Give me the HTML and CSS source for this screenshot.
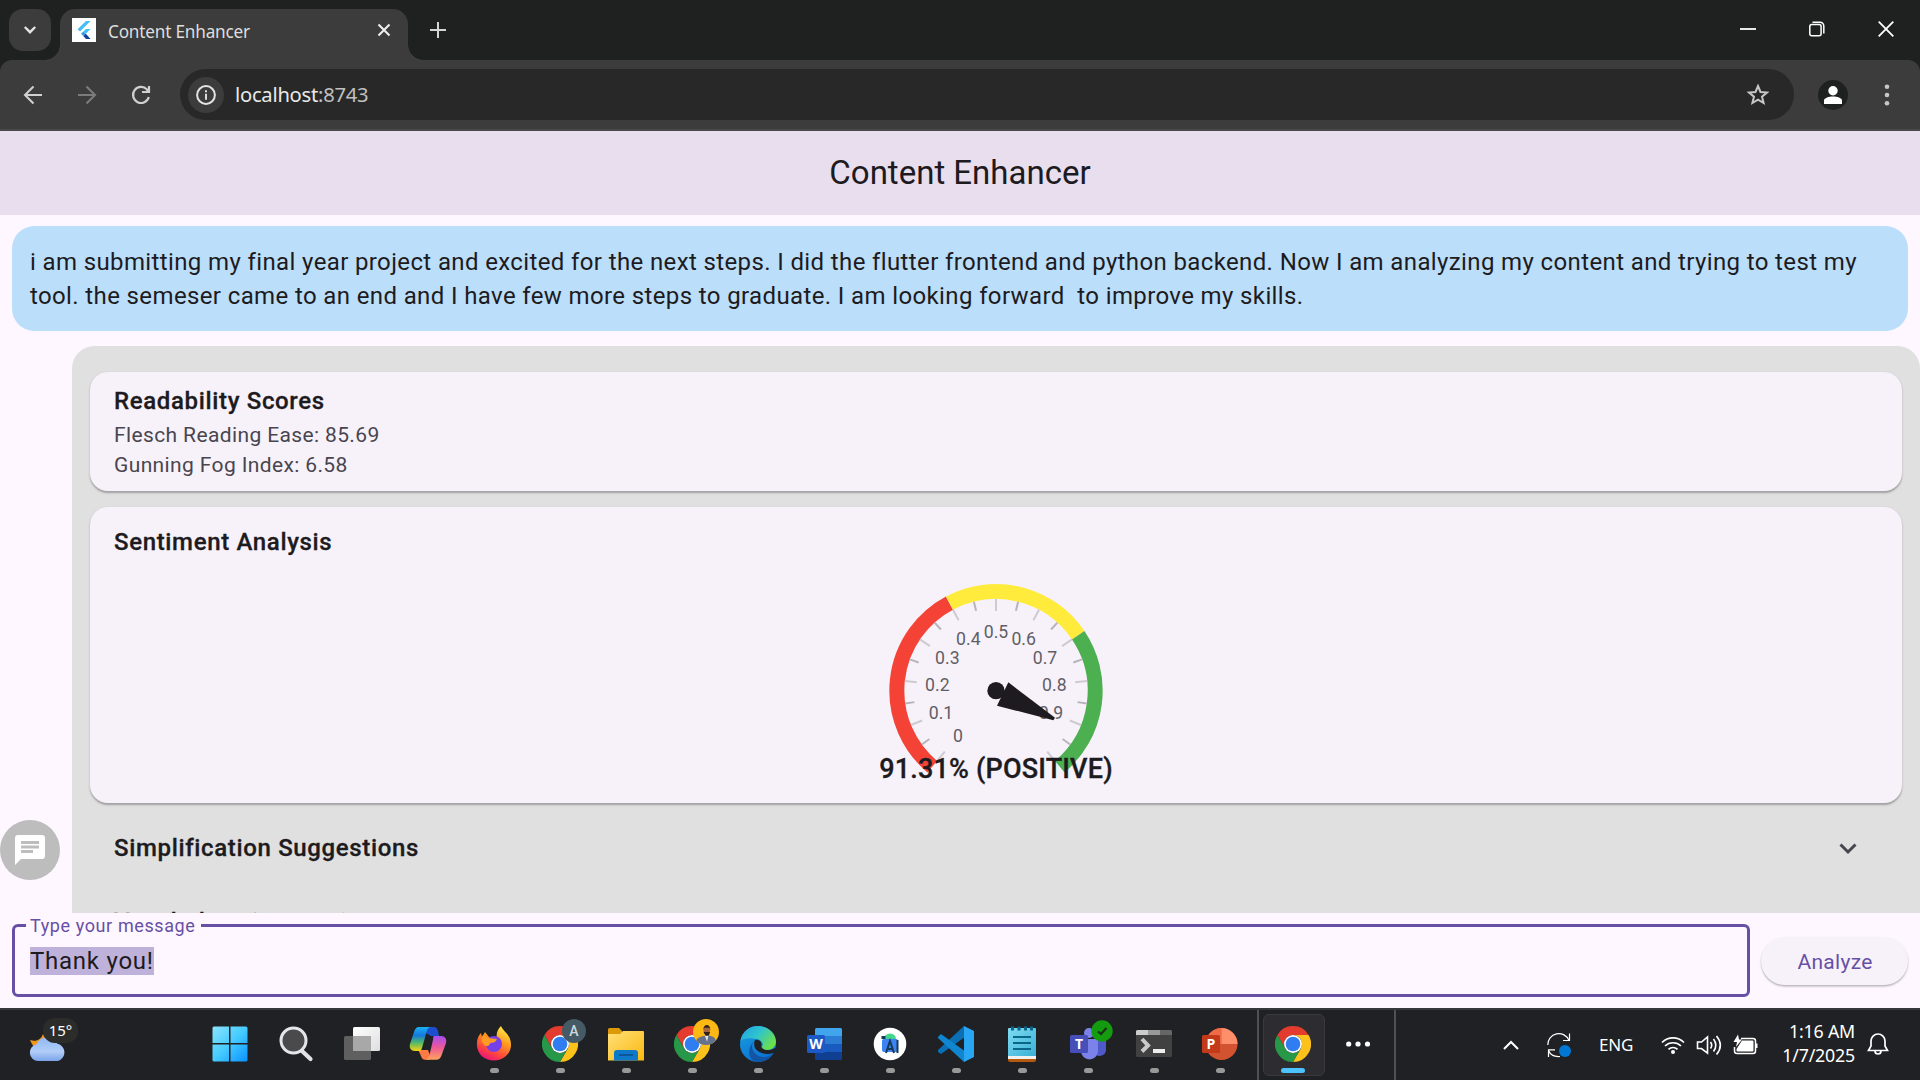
FILE: index.html
```html
<!DOCTYPE html>
<html lang="en">
<head>
<meta charset="utf-8">
<title>Content Enhancer</title>
<link rel="stylesheet" href="styles.css">
</head>
<body>
<svg class="defs" width="0" height="0" aria-hidden="true">
  <defs>
    <linearGradient id="win" x1="0" y1="0" x2="1" y2="1"><stop offset="0" stop-color="#8be3ff"/><stop offset=".5" stop-color="#45cbff"/><stop offset="1" stop-color="#0a92ff"/></linearGradient>
    <linearGradient id="cloud" x1="0" y1="0" x2="0" y2="1"><stop offset="0" stop-color="#8fb8f4"/><stop offset=".6" stop-color="#b1cdf8"/><stop offset="1" stop-color="#7ba3ea"/></linearGradient>
    <linearGradient id="copA" x1="0" y1="0" x2="0" y2="1"><stop offset="0" stop-color="#1bb0f5"/><stop offset=".35" stop-color="#1479dc"/><stop offset=".65" stop-color="#4fb86c"/><stop offset="1" stop-color="#f5d50b"/></linearGradient>
    <linearGradient id="copB" x1="0" y1="0" x2="0" y2="1"><stop offset="0" stop-color="#a84cf0"/><stop offset=".5" stop-color="#ee5a95"/><stop offset="1" stop-color="#ffa45c"/></linearGradient>
    <linearGradient id="ffx" x1=".8" y1="0" x2=".3" y2="1"><stop offset="0" stop-color="#fff04a"/><stop offset=".4" stop-color="#ff9a1f"/><stop offset=".75" stop-color="#ff4340"/><stop offset="1" stop-color="#e6127d"/></linearGradient>
    <linearGradient id="fold" x1="0" y1="0" x2="1" y2="1"><stop offset="0" stop-color="#ffe07a"/><stop offset="1" stop-color="#fbb90f"/></linearGradient>
    <linearGradient id="edgeTop" x1="0" y1="0" x2="1" y2=".6"><stop offset="0" stop-color="#1f9fe0"/><stop offset=".5" stop-color="#2fc3cf"/><stop offset="1" stop-color="#6be04b"/></linearGradient>
    <linearGradient id="edgeSide" x1="0" y1="0" x2=".6" y2="1"><stop offset="0" stop-color="#1ba1e3"/><stop offset="1" stop-color="#0a6fd0"/></linearGradient>
    <linearGradient id="pad" x1="0" y1="0" x2="1" y2="1"><stop offset="0" stop-color="#7fdcf3"/><stop offset="1" stop-color="#3ab0d5"/></linearGradient>
    <linearGradient id="view" x1="0" y1="0" x2="1" y2="1"><stop offset="0" stop-color="#fff"/><stop offset="1" stop-color="#dedede"/></linearGradient>
    <symbol id="chrome" viewBox="0 0 36 36">
      <path fill="#e33b2e" d="M2.41 9A18 18 0 0 1 33.59 9H18A9 9 0 0 0 10.2 22.5Z"/>
      <path fill="#fcc21b" d="M33.59 9A18 18 0 0 1 18 36L25.8 22.5A9 9 0 0 0 18 9Z"/>
      <path fill="#279847" d="M18 36A18 18 0 0 1 2.41 9L10.2 22.5A9 9 0 0 0 25.8 22.5Z"/>
      <circle cx="18" cy="18" r="9" fill="#fff"/><circle cx="18" cy="18" r="7.3" fill="#2f7df0"/>
    </symbol>
  </defs>
</svg>

<div class="screen">
  <header class="tabs">
    <button class="tab-search" aria-label="Search tabs"><svg width="14" height="10" viewBox="0 0 14 10"><path d="M1.8 2l5.2 5.2L12.200 2" fill="none" stroke="#e3e3e3" stroke-width="2.4"/></svg></button>
    <div class="tab">
      <svg width="24" height="24" viewBox="0 0 24 24"><path fill="#fff" d="M0 0h24v24H0z"/><path fill="#42bdf5" d="M14 3h4.500L8 13.500 5.600 11.200z"/><path fill="#42bdf5" d="M14 11h4.500l-4.700 4.700-2.400-2.300z"/><path fill="#2f9ee8" d="M9 15.700l2.400-2.300 2.400 2.300-2.400 2.400z"/><path fill="#0f3f9a" d="M11.400 18.100l2.400-2.400 4.700 5.300H14z"/></svg>
      <span class="tab-title">Content Enhancer</span>
      <svg width="14" height="14" viewBox="0 0 14 14"><path d="M1.500 1.500l11 11m0-11l-11 11" stroke="#eee" stroke-width="2.100"/></svg>
    </div>
    <svg class="new-tab" width="16" height="16" viewBox="0 0 16 16"><path d="M8 0v16M0 8h16" stroke="#d5d5d5" stroke-width="2"/></svg>
    <div class="window-controls">
      <svg width="16" height="16" viewBox="0 0 16 16"><path d="M0 8h16" stroke="#fff" stroke-width="1.800"/></svg>
      <svg width="16" height="16" viewBox="0 0 16 16" fill="none" stroke="#fff" stroke-width="1.500"><rect x=".8" y="3.500" width="11.300" height="11.300" rx="2"/><path d="M3.500 1.200H11a3.800 3.800 0 0 1 3.800 3.800v7.500"/></svg>
      <svg width="16" height="16" viewBox="0 0 16 16"><path d="M.7.700l14.600 14.600m0-14.600L.7 15.300" stroke="#fff" stroke-width="1.800"/></svg>
    </div>
  </header>

  <div class="toolbar-back">
  <nav class="toolbar">
    <div class="nav-icons">
      <svg width="20" height="20" viewBox="0 0 20 20" fill="none" stroke="#d0d0d0" stroke-width="2.100"><path d="M19 10H2.500M10.500 1.500L2 10l8.500 8.500"/></svg>
      <svg width="20" height="20" viewBox="0 0 20 20" fill="none" stroke="#7b7b7b" stroke-width="2.100"><path d="M1 10h16.500M9.500 1.500L18 10l-8.500 8.500"/></svg>
      <svg width="20" height="20" viewBox="0 0 20 20" fill="none" stroke="#d0d0d0" stroke-width="2.200"><path d="M17.800 12A8 8 0 1 1 16 4.600l1.500 2.200M18 1v6h-7"/></svg>
    </div>
    <div class="omnibox">
      <span class="site-info"><svg width="20" height="20" viewBox="0 0 20 20"><circle cx="10" cy="10" r="8.900" fill="none" stroke="#e3e3e3" stroke-width="2"/><path d="M10 8.800v6M10 5.200v2" stroke="#e3e3e3" stroke-width="1.900"/></svg></span>
      <span class="url">localhost<span class="port">:8743</span></span>
      <svg width="24" height="24" viewBox="0 0 24 24"><path d="M12 3l2.500 6 6.500.500-5 4.200 1.600 6.300L12 16.600 6.400 20 8 13.700 3 9.500 9.500 9z" fill="none" stroke="#c7c7c7" stroke-width="2"/></svg>
    </div>
    <svg class="profile" width="30" height="30" viewBox="0 0 30 30"><circle cx="15" cy="15" r="15" fill="#1f2120"/><circle cx="15" cy="10.700" r="4.700" fill="#fff"/><path fill="#fff" d="M6 24v-3.500c0-2.500 5-4 9-4s9 1.500 9 4V24z"/></svg>
    <svg class="kebab" width="6" height="22" viewBox="0 0 6 22" fill="#c7c7c7"><circle cx="3" cy="2.700" r="2.300"/><circle cx="3" cy="11" r="2.300"/><circle cx="3" cy="19.300" r="2.300"/></svg>
  </nav>
  </div>

  <h1 class="app-bar">Content Enhancer</h1>

  <main class="chat">
    <p class="bubble">i am submitting my final year project and excited for the next steps. I did the flutter frontend and python backend. Now I am analyzing my content and trying to test my<br>tool. the semeser came to an end and I have few more steps to graduate. I am looking forward&nbsp; to improve my skills.</p>
    <div class="reply">
      <svg class="avatar" width="60" height="60" viewBox="0 0 60 60"><circle cx="30" cy="30" r="30" fill="#bdbdbd"/><path fill="#fff" d="M18 15h24a3 3 0 0 1 3 3v18a3 3 0 0 1-3 3H21l-6 6V18a3 3 0 0 1 3-3z"/><path d="M21 22.500h18M21 27h18M21 31.500h12" stroke="#bdbdbd" stroke-width="3"/></svg>
      <div class="panel">
        <section class="card scores">
          <h2>Readability Scores</h2>
          <p>Flesch Reading Ease: 85.69</p>
          <p>Gunning Fog Index: 6.58</p>
        </section>
        <section class="card sentiment">
          <h2>Sentiment Analysis</h2>
          <svg class="gauge" width="280" height="240" viewBox="-12 0 840 720">
            <g fill="none" stroke-width="45" id="bands"></g>
            <g id="ticks" stroke-width="6"></g>
            <g class="gauge-labels">
              <text x="294" y="546">0</text><text x="243" y="477">0.1</text><text x="232" y="394">0.2</text><text x="262" y="312">0.3</text><text x="325" y="255">0.4</text><text x="408" y="234">0.5</text><text x="491" y="255">0.6</text><text x="555" y="312">0.7</text><text x="583" y="394">0.8</text><text x="573" y="477">0.9</text>
            </g>
            <path fill="#1d1b20" d="M445 367L585 473L580 481L411 437z"/>
            <circle cx="408" cy="392" r="26" fill="#1d1b20"/>
            <text class="gauge-value" x="408" y="655">91.31% (POSITIVE)</text>
          </svg>
        </section>
        <div class="expander"><h2>Simplification Suggestions</h2><svg width="18" height="12" viewBox="0 0 18 12"><path d="M1.500 1.500L9 9l7.500-7.500" fill="none" stroke="#49454f" stroke-width="3"/></svg></div>
        <div class="expander"><h2>Vocabulary Suggestions</h2></div>
      </div>
    </div>
  </main>

  <form class="composer">
    <fieldset class="field"><legend>Type your message</legend><span class="selected">Thank you!</span></fieldset>
    <button class="analyze" type="button">Analyze</button>
  </form>

  <footer class="taskbar">
    <div class="weather">
      <svg width="50" height="46" viewBox="0 0 50 46"><path fill="#ee971d" d="M1 22c6 2 11 0 13-6l4 8-8 9C6 31 3 27 1 22z"/><path fill="url(#cloud)" d="M9 43a8.500 8.500 0 0 1-1.500-16.800A11.500 11.500 0 0 1 28 25.500 9 9 0 0 1 29 43z"/></svg>
      <span class="temp">15°</span>
    </div>
    <div class="apps">
      <span class="app"><svg viewBox="0 0 36 36" fill="url(#win)"><path d="M2 .5h15v16.500H.5V2A1.500 1.500 0 0 1 2 .5zM18.500.500H34A1.500 1.500 0 0 1 35.500 2v15h-17zM.5 18.500H17v17H2A1.500 1.500 0 0 1 .5 34zM18.500 18.500h17V34a1.500 1.500 0 0 1-1.500 1.500H18.500z"/></svg></span>
      <span class="app"><svg viewBox="0 0 36 36"><path d="M24 25l8.500 8" stroke="#dfe3e6" stroke-width="4.200" stroke-linecap="round"/><circle cx="15.500" cy="14.500" r="12.500" fill="#4a4a4c" stroke="#e4e7e9" stroke-width="3"/></svg></span>
      <span class="app"><svg viewBox="0 0 36 36"><rect x="9" y="1" width="27" height="24" rx="1.500" fill="url(#view)"/><rect y="10" width="27" height="24" rx="1.500" fill="#666" opacity=".9"/><path d="M9 10h18v15H9z" fill="#a8a8a8"/></svg></span>
      <span class="app"><svg viewBox="0 0 36 36"><path fill="#1c4fd0" d="M16 1h8c3 0 4 3 5 9h-8l-7-4z"/><path fill="#ff7a45" d="M8 24h10l3 8-2 1.800h-4c-4 0-4-6-7-9.800z"/><path fill="url(#copA)" d="M9 1h12c-3 0-4 3-5 7l-4 14c-1 3-2 3-4 3H5c-4 0-6-3-5-7L4 6c1-3 2-5 5-5z"/><path fill="url(#copB)" d="M24 10h7c4 0 6 3 5 7l-4 11c-1 4-3 5.800-6 5.800H15c3 0 4-3 5-7l3-13c0-2 0-3 1-3.800z"/></svg></span>
      <span class="app run"><svg viewBox="0 0 36 36"><path fill="url(#ffx)" d="M18 34.500C7 34.500 0 27 1 16c.300-4 2-7 4-9l1 4 3-5 4 5c3 0 6 1 8 2-1-5 0-9 4-13 2 5 7 7 9 13 4 11-4 21.500-16 21.500z"/><circle cx="18" cy="18" r="8" fill="#7540e8"/><path fill="#ff9a22" d="M7 9l5 3 9 1c-1 3-4 4-7 4 0 3-3 4-6 2-3-3-3-7-1-10z"/></svg></span>
      <span class="app run"><svg><use href="#chrome"/></svg><svg class="badge" viewBox="0 0 24 24"><circle cx="12" cy="12" r="12" fill="#455a64"/><text x="12" y="17" class="badge-letter">A</text></svg></span>
      <span class="app run"><svg viewBox="0 0 36 36"><path fill="#dd9a08" d="M1.500 2H11l3 3v4H0V3.500A1.500 1.500 0 0 1 1.500 2z"/><path fill="url(#fold)" d="M0 8h12l3-3h20a1 1 0 0 1 1 1v28.500H0z"/><path fill="#0d79c8" d="M9 24h18a3 3 0 0 1 3 3v7.500H6V27a3 3 0 0 1 3-3z"/><path d="M11 29h14" stroke="#0b4c87" stroke-width="1.500"/></svg></span>
      <span class="app run"><svg><use href="#chrome"/></svg><svg class="badge photo" viewBox="0 0 24 24"><circle cx="12" cy="12" r="12" fill="#fcb813"/><path fill="#66718c" d="M3 20c1-3 5-4 8-4.500l4 0c3 .500 5 1 6 4.500a12 12 0 0 1-18 0z"/><path fill="#e8e6ea" d="M10.500 14h4L13 21z"/><ellipse cx="12.700" cy="10.500" rx="3" ry="4.500" fill="#a86542"/><path fill="#33221c" d="M9.500 10c0-6 6.600-6 6.500 0l-1-2h-4.500zM9.800 12h6l-1.300 3.500h-3z"/></svg></span>
      <span class="app run"><svg viewBox="0 0 36 36"><circle cx="18" cy="18" r="18" fill="url(#edgeSide)"/><path fill="url(#edgeTop)" d="M.5 15C2 6 9 0 18 0c10 0 18 7 18 15.500 0 5-4 8.500-9 8.500-4 0-6-1.500-5-3 2-3 0-7-5-8C10 11.500 3 12 .5 15z"/><path fill="#1155a4" d="M12 20c0 6 5 11 12 11 4 0 8-2 9-4-3 6-9 9-15 9C8 36 6 22 15 14c-2 2-3 4-3 6z"/><path fill="#202124" d="M15 14c4-1 7 2 6.500 5-1 2 0 4 5 5 3 .500 6-.5 10-2.500V26c-1 .5-2 .8-3 1-8 3-17-1-19-6-.5-3-.5-5 .5-7z"/></svg></span>
      <span class="app run"><svg viewBox="0 0 36 36"><rect x="9" y="2" width="27" height="32" rx="1.500" fill="#103f91"/><path fill="#41a5ee" d="M9 3.500A1.500 1.500 0 0 1 10.500 2h24A1.500 1.500 0 0 1 36 3.500V10H9z"/><path fill="#2b7cd3" d="M9 10h27v8H9z"/><path fill="#185abd" d="M9 18h27v8H9z"/><rect x="1" y="9" width="18" height="18" rx="1.500" fill="#1c59c4"/><text class="office" x="10" y="23">W</text></svg></span>
      <span class="app run"><svg viewBox="0 0 36 36"><circle cx="18" cy="18" r="16.300" fill="#fff"/><rect x="10" y="13" width="16" height="13" rx="2" fill="#3c83f5"/><path fill="#42d78b" d="M12 13a6 5.500 0 0 1 12 0z"/><path fill="none" stroke="#173a55" stroke-width="2" d="M14 27l4-12 4 12M15 23h6M25.500 14v13"/><path fill="#173a55" d="M9.500 10h4v3h-4z"/></svg></span>
      <span class="app run"><svg viewBox="0 0 36 36"><path fill="#0a6fb5" d="M26 0L0 24v2l3 2 24-17z"/><path fill="#1186d0" d="M26 36L0 12v-1l3-3 25 18z"/><path fill="#28a5f3" d="M26 0l10 5v26l-10 5V0z"/></svg></span>
      <span class="app run"><svg viewBox="0 0 36 36"><path fill="#b5590d" d="M4 31h28v3a2 2 0 0 1-2 2H6a2 2 0 0 1-2-2z"/><path fill="#f1f1ef" d="M4 29h28v4H4z"/><path fill="url(#pad)" d="M5 2h26a1 1 0 0 1 1 1v27H4V3a1 1 0 0 1 1-1z"/><path d="M9 11h18M9 17h18M9 23h18" stroke="#0a6688" stroke-width="2"/><path d="M8.500.500v4M15 .5v4M21.500.500v4M27.500.500v4" stroke="#0a6688" stroke-width="3"/></svg></span>
      <span class="app run"><svg viewBox="0 0 36 36"><circle cx="19" cy="7" r="5" fill="#7b83eb"/><path fill="#5059c9" d="M26 14h10v10a6.500 6.500 0 0 1-10 5z"/><path fill="#7b83eb" d="M11 13h17v12a8.500 8.500 0 0 1-17 0z"/><rect y="9" width="18" height="18" rx="1.500" fill="#474eb8"/><text class="office" x="9" y="23">T</text></svg><svg class="badge ok" viewBox="0 0 24 24"><circle cx="12" cy="12" r="10.700" fill="#149b10"/><path d="M8 12.500l3 2.500 5.500-6" fill="none" stroke="#173417" stroke-width="2.200"/></svg></span>
      <span class="app run"><svg viewBox="0 0 36 36"><rect y="4" width="36" height="27" rx="1.500" fill="#414141"/><path fill="#ccc" d="M1.500 4H12v5H0V5.500A1.500 1.500 0 0 1 1.500 4z"/><path fill="#999" d="M12 4h12v5H12z"/><path fill="#666" d="M24 4h10.500A1.500 1.500 0 0 1 36 5.500V9H24z"/><path d="M6 13l6 6.500-6 6" fill="none" stroke="#c9c9c9" stroke-width="4"/><path fill="#eee" d="M17 23h12v4H17z"/></svg></span>
      <span class="app run"><svg viewBox="0 0 36 36"><circle cx="19.500" cy="18" r="16" fill="#d35230"/><path fill="#ed6c47" d="M3.500 18a16 16 0 0 1 16-16v16z"/><path fill="#ff8f6b" d="M19.500 2a16 16 0 0 1 16 16h-16z"/><rect y="9" width="18" height="18" rx="1.500" fill="#c23a1a"/><text class="office" x="9" y="23">P</text></svg></span>
      <span class="app active"><svg><use href="#chrome"/></svg></span>
      <span class="app more"><svg viewBox="0 0 36 36" fill="#fff"><circle cx="8.700" cy="18" r="2.600"/><circle cx="18" cy="18" r="2.600"/><circle cx="27.500" cy="18" r="2.600"/></svg></span>
    </div>
    <div class="tray">
      <svg width="16" height="10" viewBox="0 0 16 10"><path d="M1 9l7-7 7 7" fill="none" stroke="#fff" stroke-width="2"/></svg>
      <svg class="sync" width="24" height="26" viewBox="0 0 24 26" fill="none" stroke="#fff" stroke-width="1.200"><path d="M.8 13A11 11 0 0 1 22 8.500M22.500 1.500v7H16M13 24.500C7 25 3 22 1.500 18.500M8 17.800H1.500V25"/><circle cx="18" cy="19" r="6" fill="#0078d4" stroke="none"/></svg>
      <span class="lang">ENG</span>
      <svg width="24" height="20" viewBox="0 0 24 20" fill="none" stroke="#fff" stroke-width="1.700"><path d="M1 7.500a15.500 15.500 0 0 1 22 0M4 11a11.500 11.500 0 0 1 16 0M7.500 14.300a6.500 6.500 0 0 1 9 0"/><circle cx="12" cy="17" r="2" fill="#fff" stroke="none"/></svg>
      <svg width="26" height="20" viewBox="0 0 26 20" fill="none" stroke="#fff" stroke-width="1.600"><path d="M1.500 7v6.500h4l6 4.700V2L5.500 7zM14.500 7c1.500 2 1.500 4.500 0 6.500M17.500 4c3 4 3 8.500 0 12.500M20.500 1c5 6 5 12.500 0 18.500"/></svg>
      <svg class="battery" width="26" height="20" viewBox="0 0 26 20"><path d="M8 3.500h12a2.500 2.500 0 0 1 2.500 2.500v10a2.500 2.500 0 0 1-2.500 2.500H4A2.500 2.500 0 0 1 1.500 16v-4" fill="none" stroke="#fff" stroke-width="1.500"/><path fill="#fff" d="M9 5.500h10.500a1 1 0 0 1 1 1v9a1 1 0 0 1-1 1H4.500a1 1 0 0 1-1-1V14zM23 8.500h1.500V13H23zM5-.5L.5 7H4l-1 5 6-7.500H6z"/></svg>
      <div class="clock"><span>1:16 AM</span><span>1/7/2025</span></div>
      <svg class="bell" width="22" height="24" viewBox="0 0 22 24" fill="none" stroke="#fff" stroke-width="1.700"><path d="M1.500 18.500L4 14V9a7 7 0 0 1 14 0v5l2.500 4.500zM8 19c0 4 6 4 6 0"/></svg>
    </div>
  </footer>
</div>
<script src="gauge.js"></script>
</body>
</html>
```
FILE: styles.css
```css
* { box-sizing: border-box; }
body { margin: 0; background: #fef7ff; font-family: Roboto, sans-serif; color: #1d1b20; }
h1, h2, p { margin: 0; font-weight: 400; }
svg { display: block; flex: none; overflow: visible; }
button { border: 0; padding: 0; font: inherit; }
.defs { position: absolute; }
.screen { width: 1920px; height: 1080px; display: flex; flex-direction: column; overflow: hidden; }

.tabs { position: relative; z-index: 1; height: 60px; flex: none; background: #1f2120; display: flex; align-items: flex-start; padding: 9px 26px 0 9px; }
.tab-search { width: 42px; height: 42px; border-radius: 14px; background: #3c3c3c; display: grid; place-items: center; }
.tab { position: relative; width: 348px; height: 51px; margin-left: 9px; padding: 0 17px 9px 12px; border-radius: 15px 15px 0 0; background: #3c3c3c; display: flex; align-items: center; gap: 12px; }
.tab::before, .tab::after { content: ""; position: absolute; bottom: 0; width: 15px; height: 15px; }
.tab::before { left: -15px; background: radial-gradient(circle at 0 0, transparent 14.5px, #3c3c3c 15px); }
.tab::after { right: -15px; background: radial-gradient(circle at 100% 0, transparent 14.5px, #3c3c3c 15px); }
.tab-title { flex: 1; font: 17.2px/24px "Noto Sans", sans-serif; letter-spacing: -.2px; color: #dedede; padding-top: 3px; white-space: nowrap; }
.new-tab { margin: 13px 0 0 22px; }
.window-controls { margin: 12px 0 0 auto; display: flex; gap: 53px; }

.toolbar-back { flex: none; background: #1f2120; }
.toolbar { height: 71px; background: #3c3c3c; border-bottom: 2px solid #494949; border-radius: 12px 12px 0 0; display: flex; align-items: center; padding: 0 30px 0 23px; }
.nav-icons { display: flex; gap: 34px; }
.omnibox { margin-left: 29px; width: 1614px; height: 51px; border-radius: 26px; background: #282828; display: flex; align-items: center; padding: 0 24px 0 8px; }
.site-info { width: 36px; height: 36px; border-radius: 50%; background: #3c3c3c; display: grid; place-items: center; }
.url { flex: 1; margin: -2px 0 0 11px; font: 20.2px/28px "Noto Sans", sans-serif; letter-spacing: -.25px; color: #e8e8e8; }
.port { color: #c0c0c0; }
.profile { margin-left: 24px; }
.kebab { margin-left: auto; }

.app-bar { height: 84px; flex: none; background: #e8deee; text-align: center; font-size: 33px; line-height: 83px; }

.chat { height: 698px; flex: none; overflow: hidden; padding-top: 11px; }
.bubble { margin: 0 12px; height: 105px; border-radius: 22.500px; background: #bbdefb; padding: 19px 18px 17px; font-size: 24px; line-height: 34px; letter-spacing: .375px; white-space: nowrap; }
.reply { margin-top: 15px; display: flex; gap: 12px; height: 650px; }
.avatar { margin-top: 474px; }
.panel { flex: 1; background: #e0e0e0; border-radius: 22.500px; padding: 26px 18px 0; }
.card { background: #f7f2fa; border-radius: 18px; box-shadow: 0 1.500px 3px rgba(0,0,0,.1), 0 1.500px 1.500px rgba(0,0,0,.2); padding: 0 24px; }
.scores { height: 119px; padding-top: 12px; }
h2 { font-size: 24px; font-weight: 500; line-height: 34px; letter-spacing: .65px; -webkit-text-stroke: .3px; }
.scores p { position: relative; top: 2px; font-size: 21px; line-height: 30px; letter-spacing: .375px; color: #49454f; }
.sentiment { height: 296px; margin-top: 16px; padding-top: 18px; }
.gauge { margin: 1px auto 0; }
.gauge-labels { font-size: 53px; fill: #625e66; text-anchor: middle; }
.gauge-value { font-size: 81px; font-weight: 500; fill: #1d1b20; stroke: #1d1b20; stroke-width: 1px; letter-spacing: .55px; text-anchor: middle; }
.expander { display: flex; align-items: center; justify-content: space-between; padding: 0 45px 0 24px; height: 84px; margin-top: 3px; }
.expander svg { margin-top: 2px; }
.expander + .expander { margin: 2px 0 0; height: 60px; }

.composer { height: 95px; flex: none; display: flex; padding: 0 12px; }
.field { width: 1739px; height: 84px; margin: 0; padding: 9px 15px 0 12px; border: 3px solid #6750a4; border-radius: 6px; font-size: 24px; letter-spacing: .75px; }
.field legend { margin-left: -1px; padding: 0 6px 0 4px; font-size: 18px; line-height: 25px; letter-spacing: .6px; color: #6750a4; }
.selected { display: inline-block; height: 28px; line-height: 28px; background: #bfb2da; margin-left: 3px; }
.analyze { width: 147px; height: 48px; margin: 24px 0 0 11px; border-radius: 24px; background: #f7f2fa; box-shadow: 0 1.500px 2px rgba(0,0,0,.28); color: #6750a4; font-size: 21px; font-weight: 400; letter-spacing: .3px; padding: 2px 0 0 1px; }

.taskbar { height: 72px; flex: none; background: #202124; border-top: 2px solid #38383a; display: flex; font-family: "Noto Sans", sans-serif; color: #fff; }
.weather { position: relative; width: 197px; padding: 8px 0 0 29px; }
.temp { position: absolute; left: 43px; top: 8px; width: 35px; height: 25px; border-radius: 12px; background: #2c2c2a; font-size: 15px; line-height: 24px; text-align: center; }
.apps { display: flex; }
.app { position: relative; width: 66px; padding: 16px 0 0 15px; }
.app > svg { width: 36px; height: 36px; }
.run::after, .active::after { content: ""; position: absolute; left: 29px; top: 58px; width: 9px; height: 5px; border-radius: 3px; background: #999; }
.active { border-left: 2px solid #505053; padding-left: 16px; margin-left: 4px; width: 65px; }
.active::after { left: 22px; width: 24px; background: #4cc2ff; z-index: 1; }
.active::before { content: ""; position: absolute; left: 4px; top: 4px; width: 60px; height: 60px; border-radius: 6px; background: #2d2d31; border: 1px solid #3a3a3e; }
.active > svg { position: relative; }
.more { width: 74px; padding-left: 18px; border-right: 2px solid #505053; }
.app > .badge { position: absolute; left: 35px; top: 9px; width: 24px; height: 24px; }
.app > .photo { width: 26px; height: 26px; left: 34px; }
.badge-letter { font: 500 14px Roboto, sans-serif; fill: #cfd8dc; text-anchor: middle; }
.office { font: 700 14px "Open Sans", sans-serif; fill: #fff; text-anchor: middle; }
.tray { margin-left: auto; padding-right: 31px; display: flex; align-items: center; }
.tray svg + svg { margin-left: 11px; }
.tray svg + .sync { margin-left: 28px; }
.lang { width: 34px; margin: 0 28px; font-size: 17px; letter-spacing: -.2px; white-space: nowrap; padding-bottom: 1px; }
.clock { width: 86px; margin-left: 10px; display: flex; flex-direction: column; align-items: flex-end; font-size: 17.800px; line-height: 24px; letter-spacing: -.2px; white-space: nowrap; padding-bottom: 4px; }
.tray .bell { margin: 0 0 2px 12px; }
```
FILE: gauge.js
```js
const NS = "http://www.w3.org/2000/svg";
const CX = 408, CY = 392, START = 130, SWEEP = 280;

function point(value, radius) {
  const a = (START + SWEEP * value) * Math.PI / 180;
  return [CX + radius * Math.cos(a), CY + radius * Math.sin(a)];
}

function draw(parent, d, stroke) {
  const path = document.createElementNS(NS, "path");
  path.setAttribute("d", d);
  path.setAttribute("stroke", stroke);
  document.getElementById(parent).appendChild(path);
}

[[0, 0.4, "#f44336"], [0.4, 0.7, "#ffeb3b"], [0.7, 1, "#4caf50"]].forEach(([from, to, color]) => {
  draw("bands", `M${point(from, 297.5)} A297.5 297.5 0 0 1 ${point(to, 297.5)}`, color);
});

for (let i = 0; i <= 20; i++) {
  const major = i % 2 === 0;
  draw("ticks", `M${point(i / 20, 275)} L${point(i / 20, major ? 239 : 247)}`, major ? "#cdcad0" : "#b6b4b9");
}
```
